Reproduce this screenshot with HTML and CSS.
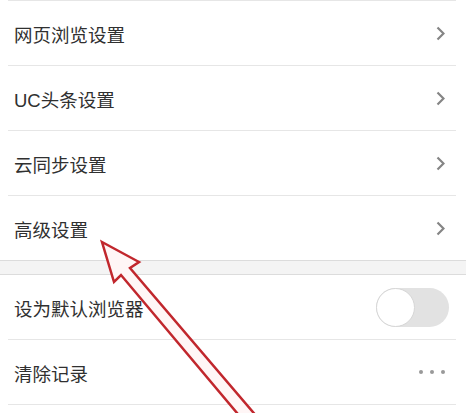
FILE: index.html
```html
<!DOCTYPE html>
<html lang="zh-CN">
<head>
    <meta charset="UTF-8">
    <meta name="viewport" content="width=device-width, initial-scale=1.0">
    <title>设置</title>
    <link rel="stylesheet" href="styles.css">
</head>
<body>
    <div class="screen">
        <div class="group">
            <div class="row">
                <span class="label">网页浏览设置</span>
                <svg class="chevron" width="9" height="15" viewBox="0 0 9 15"><polyline points="1.5,1.5 7.5,7.5 1.5,13.5"/></svg>
            </div>
            <div class="row">
                <span class="label">UC头条设置</span>
                <svg class="chevron" width="9" height="15" viewBox="0 0 9 15"><polyline points="1.5,1.5 7.5,7.5 1.5,13.5"/></svg>
            </div>
            <div class="row">
                <span class="label">云同步设置</span>
                <svg class="chevron" width="9" height="15" viewBox="0 0 9 15"><polyline points="1.5,1.5 7.5,7.5 1.5,13.5"/></svg>
            </div>
            <div class="row">
                <span class="label">高级设置</span>
                <svg class="chevron" width="9" height="15" viewBox="0 0 9 15"><polyline points="1.5,1.5 7.5,7.5 1.5,13.5"/></svg>
            </div>
        </div>

        <div class="gap"></div>

        <div class="group">
            <div class="row">
                <span class="label">设为默认浏览器</span>
                <span class="switch"><span class="knob"></span></span>
            </div>
            <div class="row">
                <span class="label">清除记录</span>
                <span class="more"><i></i><i></i><i></i></span>
            </div>
        </div>

        <!-- red annotation arrow drawn on top of the screenshot -->
        <svg class="annotation" width="466" height="413" viewBox="0 0 466 413">
            <polygon points="102,242 139,262 130,268 264,425 253,432 121,275 114,282"/>
        </svg>
    </div>
</body>
</html>
```

FILE: styles.css
```css
body {
    margin: 0;
    background-color: #ffffff;
    font-family: "Liberation Sans", "Noto Sans CJK SC", sans-serif;
}

.screen {
    position: relative;
    width: 466px;
    height: 413px;
    overflow: hidden;
    background-color: #ffffff;
}

.row {
    display: flex;
    align-items: center;
    justify-content: space-between;
    height: 64px;
    margin: 0 10px 0 8px;
    padding: 0 7px 0 6px;
    border-bottom: 1px solid #e6e6e6;
}

.group:first-child .row:first-child {
    border-top: 1px solid #e6e6e6;
}

.group:first-child .row:last-child {
    border-bottom: none;
}

.label {
    font-size: 18.5px;
    color: #303030;
    padding-top: 2px;
}

.chevron {
    margin-right: 4px;
    fill: none;
    stroke: #858585;
    stroke-width: 2.2;
}

.gap {
    height: 13px;
    background-color: #f4f4f4;
    border-top: 1px solid #dcdcdc;
    border-bottom: 1px solid #dcdcdc;
}

.switch {
    display: flex;
    width: 73px;
    height: 39px;
    border-radius: 20px;
    background-color: #e2e2e2;
}

.knob {
    width: 37px;
    height: 37px;
    border-radius: 50%;
    background-color: #ffffff;
    border: 1px solid #d6d6d6;
}

.more {
    display: flex;
    gap: 7px;
    margin-right: 4px;
}

.more i {
    width: 4px;
    height: 4px;
    border-radius: 50%;
    background-color: #999999;
}

.annotation {
    position: absolute;
    top: 0;
    left: 0;
    pointer-events: none;
}

.annotation polygon {
    fill: #fff6f6;
    stroke: #c1272d;
    stroke-width: 2.5;
    stroke-linejoin: miter;
}
```
